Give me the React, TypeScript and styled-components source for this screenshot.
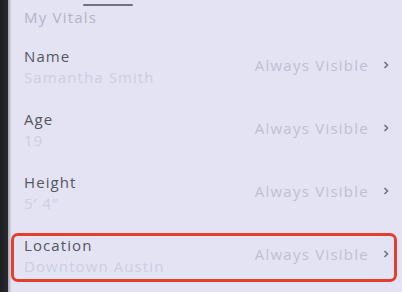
import styled, { createGlobalStyle } from 'styled-components'

const GlobalStyle = createGlobalStyle`
  html, body {
    margin: 0;
    padding: 0;
    background: #e3e3f4;
  }
  * {
    box-sizing: border-box;
  }
`

const Screen = styled.div`
  display: flex;
  width: 402px;
  height: 292px;
  overflow: hidden;
  font-family: 'Open Sans', 'Noto Sans', sans-serif;
`

const Bezel = styled.div`
  width: 8px;
  background: linear-gradient(to right, #1c1d21, #2a2b30);
`

const Edge = styled.div`
  width: 3px;
  background: linear-gradient(to right, #a9a9b6, #d6d6e4);
`

const Content = styled.div`
  flex: 1;
  display: flex;
  flex-direction: column;
  background: #e3e3f4;
`

const Handle = styled.div`
  width: 50px;
  height: 2px;
  margin: 4px 0 0 72px;
  border-radius: 1px;
  background: #72727f;
`

const SectionTitle = styled.div`
  margin: 2px 0 0 13px;
  font-size: 15px;
  line-height: 18px;
  letter-spacing: 1.2px;
  color: #b4b4c4;
`

const List = styled.div`
  display: flex;
  flex-direction: column;
  gap: 14px;
  margin-top: 18px;
  padding-right: 5px;
`

const Row = styled.div<{ $highlighted?: boolean }>`
  display: flex;
  align-items: center;
  height: 49px;
  padding: 0 5px 4px 10px;
  border: 3px solid ${(p) => (p.$highlighted ? '#e2402f' : 'transparent')};
  border-radius: 7px;
`

const Info = styled.div`
  flex: 1;
  display: flex;
  flex-direction: column;
  gap: 3px;
`

const Label = styled.div`
  font-size: 15px;
  line-height: 18px;
  letter-spacing: 1.1px;
  color: #56565f;
`

const Value = styled.div`
  font-size: 15px;
  line-height: 18px;
  letter-spacing: 1.1px;
  color: #cdcedf;
`

const Visibility = styled.div`
  display: flex;
  align-items: center;
  gap: 14px;
  margin-bottom: 3px;
  font-size: 15px;
  letter-spacing: 1.25px;
  color: #bfc0d1;
`

const Chevron = () => (
  <svg width="6" height="8" viewBox="0 0 6 8">
    <path d="M1.5 1 L4.5 4 L1.5 7" fill="none" stroke="#707080" strokeWidth="1.6" />
  </svg>
)

const vitals = [
  { label: 'Name', value: 'Samantha Smith' },
  { label: 'Age', value: '19' },
  { label: 'Height', value: '5\u2019 4\u201d' },
  { label: 'Location', value: 'Downtown Austin', highlighted: true },
]

export default function App() {
  return (
    <>
      <GlobalStyle />
      <Screen>
        <Bezel />
        <Edge />
        <Content>
          <Handle />
          <SectionTitle>My Vitals</SectionTitle>
          <List>
            {vitals.map((v) => (
              <Row key={v.label} $highlighted={v.highlighted}>
                <Info>
                  <Label>{v.label}</Label>
                  <Value>{v.value}</Value>
                </Info>
                <Visibility>
                  Always Visible
                  <Chevron />
                </Visibility>
              </Row>
            ))}
          </List>
        </Content>
      </Screen>
    </>
  )
}
